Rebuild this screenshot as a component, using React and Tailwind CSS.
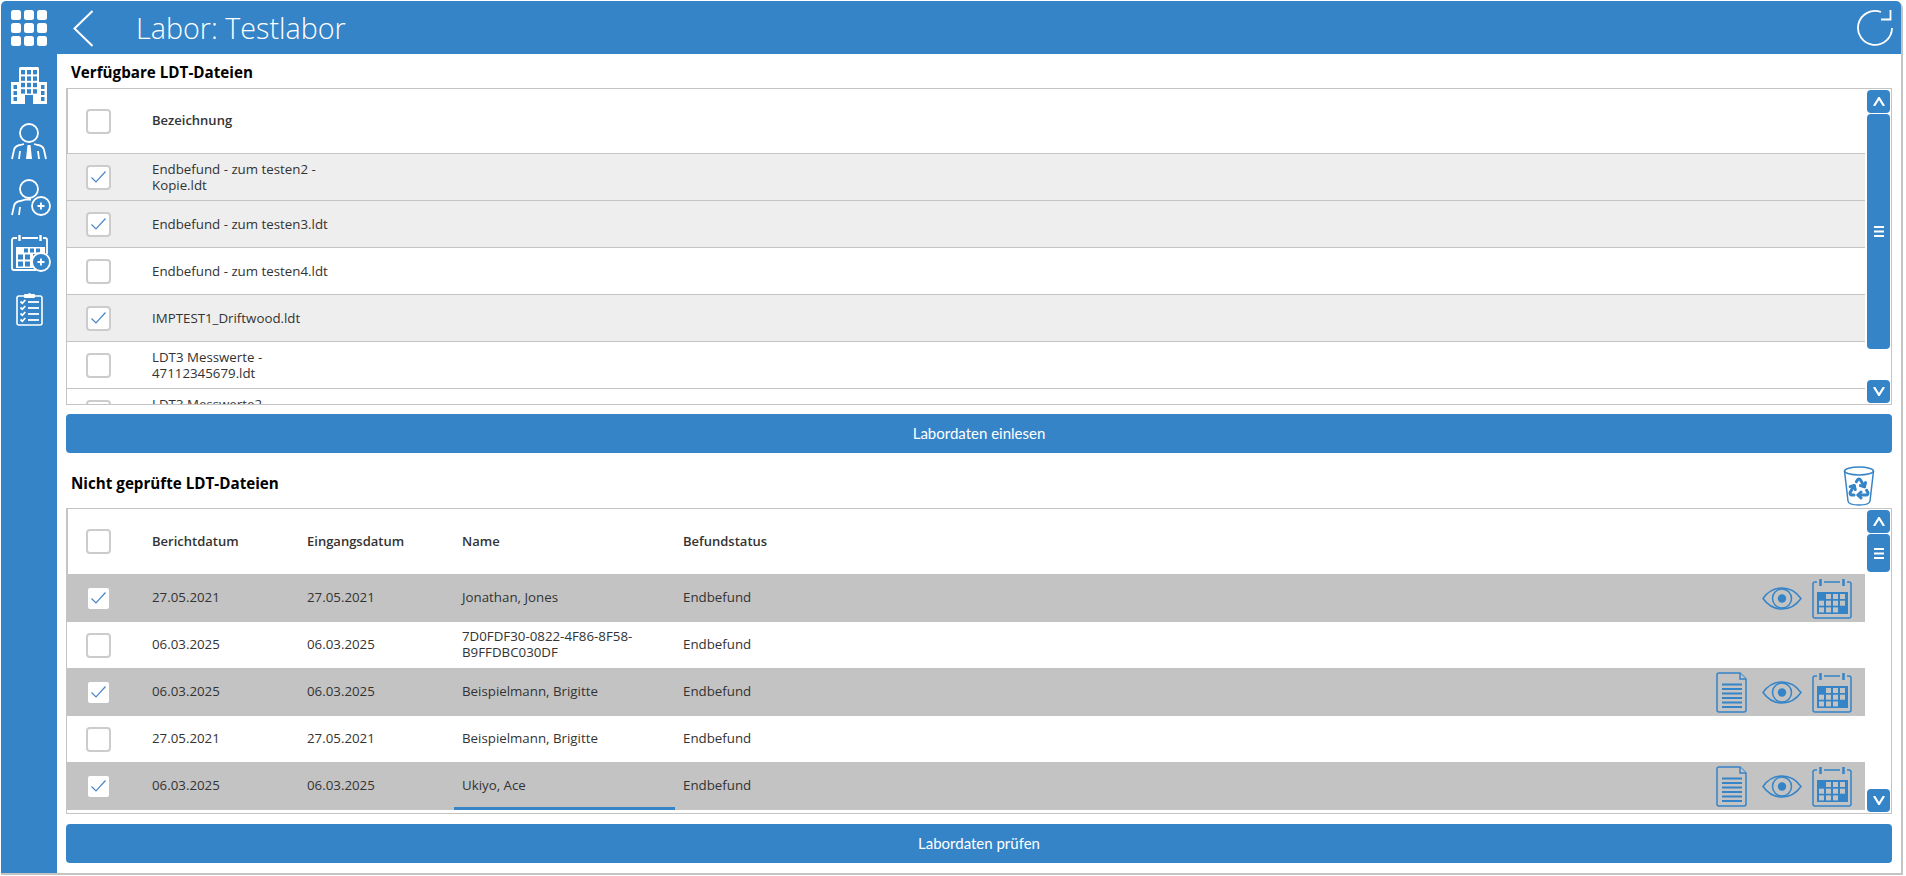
import { Recycle } from 'lucide-react'

const FONT = "font-['Open_Sans',sans-serif]"

function AppsIcon() {
  const cells = [0, 13, 26]
  return (
    <svg width="36" height="36" viewBox="0 0 36 36" fill="#fff">
      {cells.map((y) => cells.map((x) => <rect key={`${x}-${y}`} x={x} y={y} width="10" height="10" rx="2.5" />))}
    </svg>
  )
}

function BackIcon() {
  return (
    <svg width="21" height="37" viewBox="0 0 21 37" fill="none" stroke="#fff" strokeWidth="2">
      <path d="M19.5 1 1.5 18.5 19.5 36" />
    </svg>
  )
}

function RefreshIcon() {
  return (
    <svg width="38" height="38" viewBox="0 0 38 38" fill="none" stroke="#fff" strokeWidth="1.8">
      <path d="M36 19A17 17 0 1 1 25 3" />
      <path d="M34.5 1v9.5H25" />
    </svg>
  )
}

function BuildingIcon() {
  const windows = []
  for (let r = 0; r < 4; r++) {
    for (let c = 0; c < 3; c++) {
      windows.push(<rect key={`${r}-${c}`} x={10 + c * 6} y={3 + r * 6.4} width="4" height="4.400" />)
    }
  }
  return (
    <svg width="36" height="37" viewBox="0 0 36 37" fill="#fff">
      <path d="M8 1.500a1.500 1.500 0 0 1 1.500-1.500h17a1.500 1.500 0 0 1 1.500 1.500V15h8v22h-14v-9h-8v9H0V15h8z" />
      <g fill="#3584c8">
        {windows}
        <rect x="2.500" y="18" width="3.500" height="4" />
        <rect x="2.500" y="24" width="3.500" height="4" />
        <rect x="2.500" y="30" width="3.500" height="4" />
        <rect x="30" y="18" width="3.500" height="4" />
        <rect x="30" y="24" width="3.500" height="4" />
        <rect x="30" y="30" width="3.500" height="4" />
      </g>
    </svg>
  )
}

function PersonIcon() {
  return (
    <svg width="36" height="37" viewBox="0 0 36 37" fill="none" stroke="#fff" strokeWidth="1.8">
      <circle cx="18" cy="10" r="9" />
      <path d="M1 36 3 27c.6-3 3-4.5 6-5l4-1M35 36l-2-9c-.6-3-3-4.5-6-5l-4-1" />
      <path d="M8 36l1-8M28 36l-1-8" />
      <path d="M16.5 22h3l1.500 14h-6z" fill="#fff" stroke="none" />
    </svg>
  )
}

function PlusBadge({ cx, cy }) {
  return (
    <g>
      <circle cx={cx} cy={cy} r="9" fill="#3584c8" stroke="#fff" strokeWidth="1.8" />
      <path d={`M${cx - 3.5} ${cy}h7M${cx} ${cy - 3.5}v7`} stroke="#fff" strokeWidth="1.8" />
    </g>
  )
}

function PersonPlusIcon() {
  return (
    <svg width="40" height="37" viewBox="0 0 40 37" fill="none" stroke="#fff" strokeWidth="1.8">
      <circle cx="18" cy="10" r="9" />
      <path d="M1 36 3 27c.6-3 3-4.5 6-5l6-1.500h5" />
      <path d="M8 36l1-8" />
      <PlusBadge cx="30" cy="27" />
    </svg>
  )
}

function CalendarPlusIcon() {
  return (
    <svg width="40" height="37" viewBox="0 0 40 37" fill="none" stroke="#fff" strokeWidth="1.8">
      <path d="M6 3H3a2 2 0 0 0-2 2v28a2 2 0 0 0 2 2h22M11 3h16M32 3h2a2 2 0 0 1 2 2v14" />
      <path d="M8.500 0v6M29.500 0v6" strokeWidth="2.400" />
      <path d="M5 12h29v7H22v14H5z" fill="#fff" stroke="none" />
      <g fill="#3584c8" stroke="none">
        <rect x="13" y="13.500" width="4" height="4" />
        <rect x="19" y="13.500" width="4" height="4" />
        <rect x="25" y="13.500" width="4" height="4" />
        <rect x="7" y="19.500" width="5" height="5" />
        <rect x="14" y="19.500" width="5" height="5" />
        <rect x="7" y="26.500" width="5" height="5" />
        <rect x="14" y="26.500" width="5" height="5" />
      </g>
      <PlusBadge cx="30" cy="27" />
    </svg>
  )
}

function ClipboardIcon() {
  const rows = [9, 15, 21, 27]
  return (
    <svg width="27" height="33" viewBox="0 0 27 33" fill="none" stroke="#fff" strokeWidth="1.6">
      <rect x="1" y="3" width="25" height="29" rx="2" />
      <rect x="8" y="1" width="11" height="4" rx="1" fill="#fff" stroke="none" />
      <circle cx="13.500" cy="1.500" r="1.500" fill="#fff" stroke="none" />
      {rows.map((y) => (
        <g key={y}>
          <path d="M4.500 8.500l1.800 1.800 3-3.300" transform={`translate(0 ${y - 9})`} strokeWidth="1.800" />
          <path d={`M12 ${y}h11`} strokeWidth="1.800" />
        </g>
      ))}
    </svg>
  )
}

function RecycleBinIcon() {
  return (
    <svg width="32" height="41" viewBox="0 0 32 41" fill="none" stroke="#3584c8" strokeWidth="1.500">
      <ellipse cx="16" cy="6" rx="14.500" ry="4" />
      <path d="M1.500 6 5 36c.3 2.500 5 4 11 4s10.700-1.500 11-4l3.500-30" />
      <Recycle x="4" y="11" size="24" strokeWidth="3" color="#3584c8" />
    </svg>
  )
}

function EyeIcon() {
  return (
    <svg width="40" height="23" viewBox="0 0 40 23" fill="none" stroke="#3584c8" strokeWidth="1.500">
      <path d="M1 11.500C6 4.500 12.500 1 20 1s14 3.500 19 10.500C34 18.500 27.500 22 20 22S6 18.500 1 11.500z" />
      <circle cx="20" cy="11.500" r="9.500" />
      <circle cx="20" cy="11.500" r="4.200" fill="#3584c8" stroke="none" />
    </svg>
  )
}

function DocIcon() {
  return (
    <svg width="31" height="41" viewBox="0 0 31 41" fill="none" stroke="#3584c8" strokeWidth="1.500">
      <path d="M3 1h21l6 6v31a2 2 0 0 1-2 2H3a2 2 0 0 1-2-2V3a2 2 0 0 1 2-2z" />
      <path d="M24 1v6h6" fill="#c3c3c3" />
      <path d="M6 12.500h20M6 17h20M6 21.500h20M6 26h20M6 30.500h20M6 35h20" strokeWidth="2" />
    </svg>
  )
}

function CalendarIcon() {
  const cells = [
    [1, 0], [2, 0], [3, 0],
    [0, 1], [1, 1], [2, 1], [3, 1],
    [0, 2], [1, 2], [2, 2],
  ]
  return (
    <svg width="40" height="41" viewBox="0 0 40 41" fill="none" stroke="#3584c8" strokeWidth="1.500">
      <path d="M5 4H3a2 2 0 0 0-2 2v32a2 2 0 0 0 2 2h34a2 2 0 0 0 2-2V6a2 2 0 0 0-2-2h-2M12 4h16" />
      <path d="M8.500 1v7M31.500 1v7" strokeWidth="2.500" />
      <rect x="5" y="14" width="31" height="22" fill="#3584c8" stroke="none" />
      <g fill="#c3c3c3" stroke="none">
        {cells.map(([c, r]) => (
          <rect key={`${c}-${r}`} x={7 + c * 7} y={16 + r * 6.700} width="5" height="5" />
        ))}
      </g>
    </svg>
  )
}

function CheckMark() {
  return (
    <svg width="15" height="12" viewBox="0 0 15 12" fill="none" stroke="#4a87c9" strokeWidth="1.200">
      <path d="M.5 6.500 5 11 14.500 .5" />
    </svg>
  )
}

function Checkbox({ checked, onGrey }) {
  if (onGrey) {
    return (
      <span className="ml-[2px] flex h-[21px] w-[21px] items-center justify-center rounded-[2px] bg-white">
        <CheckMark />
      </span>
    )
  }
  return (
    <span className="flex h-[25px] w-[25px] items-center justify-center rounded-[4px] border-2 border-[#cccccc] bg-white">
      {checked && <CheckMark />}
    </span>
  )
}

function ScrollBar({ thumbClass }) {
  return (
    <div className="mr-px flex h-full w-[23px] flex-col py-px">
      <button className="flex h-[23px] shrink-0 items-center justify-center rounded-[4px] bg-[#3584c8]">
        <svg width="12" height="9" viewBox="0 0 12 9" fill="none" stroke="#fff" strokeWidth="2.200"><path d="M1 9 6 1l5 8" /></svg>
      </button>
      <div className={`mt-px flex items-center justify-center rounded-[4px] bg-[#3584c8] ${thumbClass}`}>
        <svg width="10" height="11" viewBox="0 0 10 11" fill="#fff"><rect y="0" width="10" height="2" /><rect y="4.500" width="10" height="2" /><rect y="9" width="10" height="2" /></svg>
      </div>
      <button className="mt-auto flex h-[23px] shrink-0 items-center justify-center rounded-[4px] bg-[#3584c8]">
        <svg width="12" height="9" viewBox="0 0 12 9" fill="none" stroke="#fff" strokeWidth="2.200"><path d="M1 0l5 8 5-8" /></svg>
      </button>
    </div>
  )
}

const fileRows = [
  { name: 'Endbefund - zum testen2 - Kopie.ldt', checked: true },
  { name: 'Endbefund - zum testen3.ldt', checked: true },
  { name: 'Endbefund - zum testen4.ldt', checked: false },
  { name: 'IMPTEST1_Driftwood.ldt', checked: true },
  { name: 'LDT3 Messwerte - 47112345679.ldt', checked: false },
  { name: 'LDT3 Messwerte2 - 47112345679.ldt', checked: false },
]

const checkRows = [
  { report: '27.05.2021', received: '27.05.2021', name: 'Jonathan, Jones', checked: true, doc: false, actions: true },
  { report: '06.03.2025', received: '06.03.2025', name: '7D0FDF30-0822-4F86-8F58-B9FFDBC030DF', checked: false },
  { report: '06.03.2025', received: '06.03.2025', name: 'Beispielmann, Brigitte', checked: true, doc: true, actions: true },
  { report: '27.05.2021', received: '27.05.2021', name: 'Beispielmann, Brigitte', checked: false },
  { report: '06.03.2025', received: '06.03.2025', name: 'Ukiyo, Ace', checked: true, doc: true, actions: true, focused: true },
]

function FileTable() {
  return (
    <div className="flex h-[317px] overflow-hidden border border-[#c4c4c4]">
      <div className="w-[1798px] overflow-hidden">
        <div className="-ml-px grid h-[65px] grid-cols-[76px_1fr] items-center border-b border-l-2 border-[#c4c4c4]">
          <div className="pl-[18px]"><Checkbox /></div>
          <div className="pl-2 text-[13px] font-semibold text-[#333333]">Bezeichnung</div>
        </div>
        {fileRows.map((row) => (
          <div key={row.name} className={`grid h-[47px] grid-cols-[77px_220px] items-center border-b border-[#c4c4c4] ${row.checked ? 'bg-[#eeeeee]' : 'bg-white'}`}>
            <div className="pl-[19px]"><Checkbox checked={row.checked} /></div>
            <div className="px-2 leading-4 text-[#333333]">{row.name}</div>
          </div>
        ))}
      </div>
      <div className="ml-auto"><ScrollBar thumbClass="h-[235px]" /></div>
    </div>
  )
}

function CheckTable() {
  return (
    <div className="flex h-[306px] overflow-hidden border border-[#c4c4c4]">
      <div className="w-[1798px] overflow-hidden">
        <div className="-ml-px grid h-[65px] grid-cols-[76px_155px_155px_221px_1fr] items-center border-l-2 border-[#c4c4c4] text-[13px] font-semibold text-[#333333]">
          <div className="pl-[18px]"><Checkbox /></div>
          <div className="pl-2">Berichtdatum</div>
          <div className="pl-2">Eingangsdatum</div>
          <div className="pl-2">Name</div>
          <div className="pl-2">Befundstatus</div>
        </div>
        {checkRows.map((row, i) => (
          <div key={i} className={`grid grid-cols-[77px_155px_155px_221px_180px_1fr] items-center text-[#333333] ${row.checked ? 'h-[48px] bg-[#c3c3c3]' : 'h-[46px] bg-white'}`}>
            <div className="pl-[19px]"><Checkbox checked={row.checked} onGrey={row.checked} /></div>
            <div className="px-2">{row.report}</div>
            <div className="px-2">{row.received}</div>
            <div className={`flex h-full items-center px-2 pb-[2px] leading-4 ${row.focused ? 'border-b-[3px] border-[#3584c8]' : ''}`}>
              <span className={row.focused ? 'pt-[3px]' : ''}>{row.name}</span>
            </div>
            <div className="px-2">Endbefund</div>
            {row.actions && (
              <div className="flex items-center justify-end gap-[15px] pr-[13px]">
                {row.doc && <DocIcon />}
                <div className="flex items-center gap-[10px]">
                  <EyeIcon />
                  <CalendarIcon />
                </div>
              </div>
            )}
          </div>
        ))}
      </div>
      <div className="ml-auto"><ScrollBar thumbClass="h-[38px]" /></div>
    </div>
  )
}

export default function App() {
  return (
    <div className={`h-screen w-full overflow-hidden bg-white pl-px pt-px ${FONT}`}>
      <div className="flex h-[874px] w-[1902px] flex-col rounded-tr-lg border-r-2 border-b-2 border-[#c4c4c4]">
        <header className="flex h-[53px] shrink-0 items-center rounded-t-[5px] bg-[#3584c8]">
          <div className="flex w-14 justify-center"><AppsIcon /></div>
          <div className="ml-[16px] mt-px"><BackIcon /></div>
          <h1 className="ml-[42px] text-[28.700px] font-light text-white">Labor: Testlabor</h1>
          <div className="ml-auto mr-[7px] mt-[1px]"><RefreshIcon /></div>
        </header>
        <div className="flex min-h-0 flex-1">
          <aside className="flex w-14 shrink-0 flex-col items-center bg-[#3584c8] pt-[3px]">
            <div className="flex h-14 items-center"><BuildingIcon /></div>
            <div className="flex h-14 items-center"><PersonIcon /></div>
            <div className="flex h-14 items-center pl-1"><PersonPlusIcon /></div>
            <div className="flex h-14 items-center pl-1"><CalendarPlusIcon /></div>
            <div className="flex h-14 items-center"><ClipboardIcon /></div>
          </aside>
          <main className="flex min-w-0 flex-1 flex-col px-[9px] text-[13.300px]">
            <div className="flex h-[34px] shrink-0 items-center pl-[5px] pt-[2px] text-[15.200px] font-bold text-black">Verfügbare LDT-Dateien</div>
            <FileTable />
            <button className="mt-[9px] h-[39px] shrink-0 rounded-[4px] bg-[#3584c8] font-['Lato',sans-serif] text-[15px] font-normal text-white">Labordaten einlesen</button>
            <div className="flex h-[55px] shrink-0 items-center justify-between pl-[5px] pr-[17px] pt-[5px] text-[15.200px] font-bold text-black">
              <span>Nicht geprüfte LDT-Dateien</span>
              <span className="mt-[5px] flex"><RecycleBinIcon /></span>
            </div>
            <CheckTable />
            <button className="mt-[10px] h-[39px] shrink-0 rounded-[4px] bg-[#3584c8] font-['Lato',sans-serif] text-[15px] font-normal text-white">Labordaten prüfen</button>
          </main>
        </div>
      </div>
    </div>
  )
}
